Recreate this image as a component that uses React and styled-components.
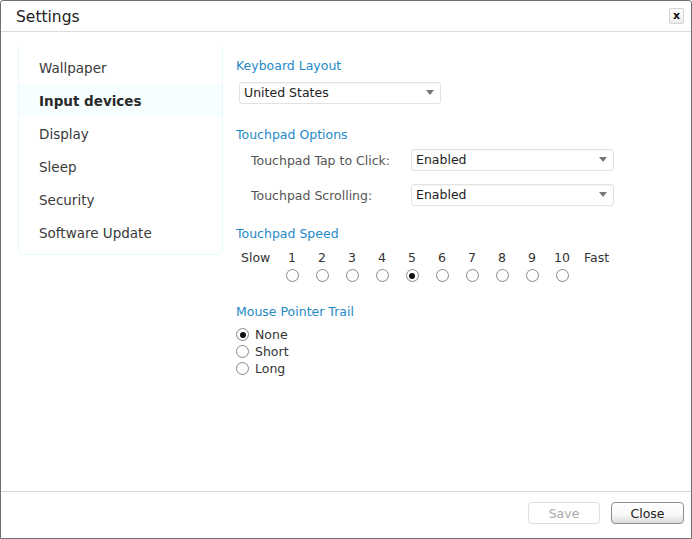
import React from 'react';
import styled, { createGlobalStyle } from 'styled-components';

const GlobalStyle = createGlobalStyle`
  html, body {
    margin: 0;
    padding: 0;
    background: #ffffff;
  }
  #root {
    width: 692px;
    height: 539px;
  }
`;

const Dialog = styled.div`
  box-sizing: border-box;
  width: 692px;
  height: 539px;
  display: flex;
  flex-direction: column;
  border: 1px solid #707070;
  border-radius: 3px 3px 0 0;
  background: #ffffff;
  font-family: 'DejaVu Sans', 'Liberation Sans', sans-serif;
  color: #333333;
`;

const TitleBar = styled.div`
  height: 30px;
  display: flex;
  align-items: center;
  justify-content: space-between;
  padding: 0 7px 0 15px;
  border-bottom: 1px solid #dcdcdc;
`;

const Title = styled.div`
  font-size: 15.5px;
  color: #222222;
  padding-top: 1px;
`;

const CloseX = styled.div`
  box-sizing: border-box;
  width: 15px;
  height: 16px;
  margin-top: -1px;
  display: flex;
  align-items: center;
  justify-content: center;
  border: 1px solid #d4d4d4;
  border-radius: 2px;
  background: linear-gradient(#ffffff, #ececec);
  font-size: 11px;
  font-weight: bold;
  color: #111111;
`;

const Body = styled.div`
  flex: 1;
  display: flex;
  align-items: flex-start;
  padding: 15px 0 0 17px;
`;

const Sidebar = styled.ul`
  box-sizing: border-box;
  width: 205px;
  margin: 0;
  padding: 4px 0 5px;
  list-style: none;
  border: 1px solid #e3f9fd;
  border-top: none;
  border-radius: 0 0 6px 6px;
`;

const NavItem = styled.li`
  height: 33px;
  display: flex;
  align-items: center;
  padding-left: 20px;
  font-size: 13.5px;
  font-weight: ${({ active }) => (active ? 'bold' : 'normal')};
  color: ${({ active }) => (active ? '#2a2a2a' : '#3a3a3a')};
  background: ${({ active }) => (active ? '#f6feff' : 'transparent')};
`;

const Content = styled.div`
  flex: 1;
  padding: 11px 0 0 13px;
  font-size: 12.5px;
`;

const Heading = styled.div`
  color: #2589c8;
  font-size: 12.5px;
  line-height: 16px;
  margin-top: ${({ gap }) => gap || 0}px;
`;

const SelectBox = styled.div`
  box-sizing: border-box;
  width: ${({ width }) => width}px;
  height: 22px;
  display: flex;
  align-items: center;
  justify-content: space-between;
  padding: 0 6px 1px 4px;
  border: 1px solid #e2e2e2;
  border-radius: 3px;
  box-shadow: inset 0 1px 1px rgba(0, 0, 0, 0.04);
  background: #ffffff;
  color: #222222;
  font-size: 12.5px;
`;

const Arrow = styled.span`
  width: 0;
  height: 0;
  border-left: 4.5px solid transparent;
  border-right: 4.5px solid transparent;
  border-top: 5px solid #777777;
`;

const KeyboardSelect = styled.div`
  margin: 8px 0 0 3px;
`;

const OptionRows = styled.div`
  margin-top: 6px;
  display: flex;
  flex-direction: column;
  gap: 13px;
`;

const OptionRow = styled.div`
  display: grid;
  grid-template-columns: 160px auto;
  align-items: center;
  padding-left: 15px;
`;

const OptionLabel = styled.span`
  color: #555555;
`;

const SpeedGrid = styled.div`
  margin-top: 7px;
  display: grid;
  grid-template-columns: 41px repeat(10, 30px) auto;
  grid-template-rows: 16px 20px;
  align-items: center;
  color: #333333;
`;

const SpeedEnd = styled.span`
  padding-left: ${({ pad }) => pad}px;
`;

const SpeedNum = styled.span`
  text-align: center;
`;

const RadioCell = styled.span`
  display: flex;
  justify-content: center;
  padding-top: 1px;
`;

const Radio = styled.span`
  box-sizing: border-box;
  width: 13px;
  height: 13px;
  border-radius: 50%;
  border: 1px solid #8a8a8a;
  background: radial-gradient(circle at 50% 40%, #ffffff 55%, #ececec 100%);
  display: flex;
  align-items: center;
  justify-content: center;
  flex-shrink: 0;

  &::after {
    content: '';
    display: ${({ checked }) => (checked ? 'block' : 'none')};
    width: 6px;
    height: 6px;
    border-radius: 50%;
    background: #111111;
  }
`;

const TrailList = styled.div`
  margin-top: 6px;
  display: flex;
  flex-direction: column;
`;

const TrailOption = styled.label`
  height: 17px;
  display: flex;
  align-items: center;
  gap: 6px;
  color: #333333;
`;

const Footer = styled.div`
  height: 47px;
  border-top: 1px solid #d6d6d6;
  display: flex;
  justify-content: flex-end;
  align-items: flex-start;
  gap: 11px;
  padding: 10px 7px 0 0;
  box-sizing: border-box;
`;

const Button = styled.button`
  box-sizing: border-box;
  width: ${({ width }) => width}px;
  height: 22px;
  padding: 0;
  border-radius: 4px;
  font-family: 'DejaVu Sans', 'Liberation Sans', sans-serif;
  font-size: 12.5px;
  border: 1px solid ${({ disabled }) => (disabled ? '#dedede' : '#8c8c8c')};
  color: ${({ disabled }) => (disabled ? '#aaaaaa' : '#222222')};
  background: ${({ disabled }) =>
    disabled ? '#ffffff' : 'linear-gradient(#ffffff 0%, #f8f8f8 60%, #dcdcdc 100%)'};
`;

const navItems = ['Wallpaper', 'Input devices', 'Display', 'Sleep', 'Security', 'Software Update'];
const speeds = [1, 2, 3, 4, 5, 6, 7, 8, 9, 10];
const trails = ['None', 'Short', 'Long'];

const App = () => (
  <>
    <GlobalStyle />
    <Dialog>
      <TitleBar>
        <Title>Settings</Title>
        <CloseX>x</CloseX>
      </TitleBar>
      <Body>
        <Sidebar>
          {navItems.map((item) => (
            <NavItem key={item} active={item === 'Input devices'}>
              {item}
            </NavItem>
          ))}
        </Sidebar>
        <Content>
          <Heading>Keyboard Layout</Heading>
          <KeyboardSelect>
            <SelectBox width={202}>
              United States
              <Arrow />
            </SelectBox>
          </KeyboardSelect>

          <Heading gap={23}>Touchpad Options</Heading>
          <OptionRows>
            <OptionRow>
              <OptionLabel>Touchpad Tap to Click:</OptionLabel>
              <SelectBox width={203}>
                Enabled
                <Arrow />
              </SelectBox>
            </OptionRow>
            <OptionRow>
              <OptionLabel>Touchpad Scrolling:</OptionLabel>
              <SelectBox width={203}>
                Enabled
                <Arrow />
              </SelectBox>
            </OptionRow>
          </OptionRows>

          <Heading gap={20}>Touchpad Speed</Heading>
          <SpeedGrid>
            <SpeedEnd pad={5}>Slow</SpeedEnd>
            {speeds.map((n) => (
              <SpeedNum key={n}>{n}</SpeedNum>
            ))}
            <SpeedEnd pad={7}>Fast</SpeedEnd>
            <span />
            {speeds.map((n) => (
              <RadioCell key={n}>
                <Radio checked={n === 5} />
              </RadioCell>
            ))}
            <span />
          </SpeedGrid>

          <Heading gap={19}>Mouse Pointer Trail</Heading>
          <TrailList>
            {trails.map((t) => (
              <TrailOption key={t}>
                <Radio checked={t === 'None'} />
                {t}
              </TrailOption>
            ))}
          </TrailList>
        </Content>
      </Body>
      <Footer>
        <Button width={72} disabled>
          Save
        </Button>
        <Button width={73}>Close</Button>
      </Footer>
    </Dialog>
  </>
);

export default App;
